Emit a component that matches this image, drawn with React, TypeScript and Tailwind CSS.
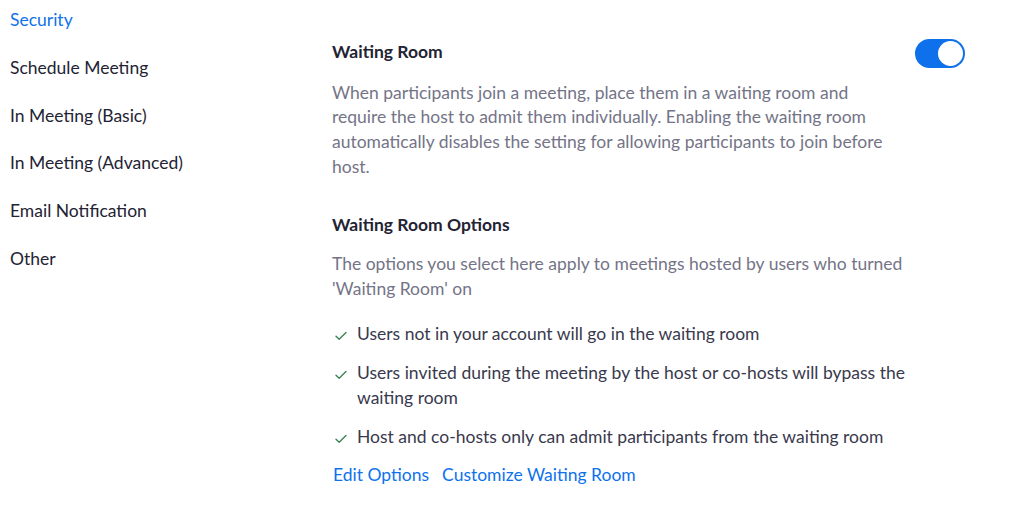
import React from "react";

const NAV = [
  "Security",
  "Schedule Meeting",
  "In Meeting (Basic)",
  "In Meeting (Advanced)",
  "Email Notification",
  "Other",
];

const OPTIONS = [
  "Users not in your account will go in the waiting room",
  "Users invited during the meeting by the host or co-hosts will bypass the waiting room",
  "Host and co-hosts only can admit participants from the waiting room",
];

function Check() {
  return (
    <svg width="12" height="10" viewBox="0 0 12 10" fill="none" className="mt-[9px] shrink-0">
      <path d="M1 5.2 L4.2 8.3 L11 1.5" stroke="#3b8455" strokeWidth="1.4" strokeLinecap="round" strokeLinejoin="round" />
    </svg>
  );
}

export default function App() {
  return (
    <div className="flex min-h-[521px] bg-white text-[17.5px] leading-[24.7px] text-[#232333]" style={{ fontFamily: "Lato, 'Open Sans', sans-serif" }}>
      <nav className="flex w-[332px] shrink-0 flex-col gap-[23.1px] pl-[10px] pt-[8px]">
        {NAV.map((n, i) => (
          <a key={n} href="#" className={i === 0 ? "text-[#0e72ed]" : "text-[#232333]"}>
            {n}
          </a>
        ))}
      </nav>

      <main className="flex flex-1 items-start pr-[46px] pt-[39px]">
        <div className="w-[580px]">
          <h2 className="pt-[1px] font-bold text-[#232333]">Waiting Room</h2>
          <p className="mt-[16px] w-[572px] text-[#747487]">
            When participants join a meeting, place them in a waiting room and require the host to admit them individually. Enabling the waiting room automatically disables the setting for allowing participants to join before host.
          </p>

          <h3 className="mt-[33px] font-bold text-[#232333]">Waiting Room Options</h3>
          <p className="mt-[15px] w-[572px] text-[#747487]">
            The options you select here apply to meetings hosted by users who turned 'Waiting Room' on
          </p>

          <ul className="mt-[20.5px] flex flex-col gap-[14.3px]">
            {OPTIONS.map((o) => (
              <li key={o} className="flex gap-[10px] pl-[3px] text-[#39394d]">
                <Check />
                <span>{o}</span>
              </li>
            ))}
          </ul>

          <div className="mt-[13px] flex gap-[13px] pl-[1px] text-[#0e72ed]">
            <a href="#">Edit Options</a>
            <a href="#">Customize Waiting Room</a>
          </div>
        </div>

        <div className="ml-auto flex h-[29px] w-[50px] items-center justify-end rounded-full bg-[#0e71eb] pr-[2px]">
          <div className="h-[25px] w-[25px] rounded-full bg-white" />
        </div>
      </main>
    </div>
  );
}
